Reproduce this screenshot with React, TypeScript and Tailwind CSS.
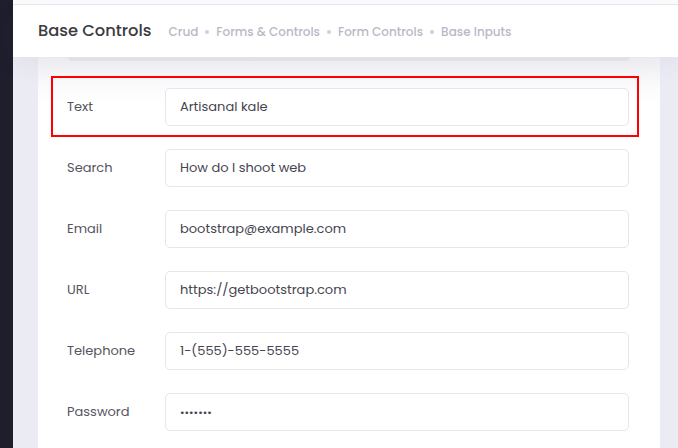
const fields = [
  { label: "Text", value: "Artisanal kale", type: "text", active: true },
  { label: "Search", value: "How do I shoot web", type: "search" },
  { label: "Email", value: "bootstrap@example.com", type: "email" },
  { label: "URL", value: "https://getbootstrap.com", type: "url" },
  { label: "Telephone", value: "1-(555)-555-5555", type: "tel" },
  { label: "Password", value: "1234567", type: "password" },
];

const crumbs = ["Crud", "Forms & Controls", "Form Controls", "Base Inputs"];

export default function App() {
  return (
    <div className="flex h-[448px] w-[678px] overflow-hidden bg-[#ebebf4] font-['Poppins','Inter',sans-serif]">
      <div className="w-[13px] shrink-0 bg-[#1e1e2d]" />

      <div className="flex min-w-0 flex-1 flex-col">
        <div className="h-[4px] shrink-0 bg-[#fcfcfd]" />
        <header className="relative z-10 flex h-[53px] shrink-0 items-center border-t border-[#e6e6ee] bg-white pl-[25px] shadow-[0_8px_24px_0_rgba(82,63,105,0.06)]">
          <h1 className="text-[16.3px] font-medium text-[#3a3a3f]">Base Controls</h1>
          <ul className="ml-[17px] mt-[2px] flex items-center text-[12px] font-medium text-[#b9b9c6]">
            {crumbs.map((c, i) => (
              <li key={c} className="flex items-center">
                {i > 0 && <span className="mx-[7px] h-[4px] w-[4px] rounded-full bg-[#cfcfd9]" />}
                {c}
              </li>
            ))}
          </ul>
        </header>

        <div className="flex min-h-0 flex-1 pl-[25px] pr-[18px]">
          <div className="flex-1 bg-[linear-gradient(to_bottom,#f2f2f6_0px,#ffffff_45px)]">
            <div className="mx-[30px] h-[4px] rounded-b-[6px] bg-[#e9e9f0]" />
            <div className="pl-[13px] pr-[21px] pt-[15px]">
              {fields.map((f) => (
                <div
                  key={f.label}
                  className={
                    "flex h-[61px] items-start border-2 pl-[14px] pr-[8px] pt-[10px] " +
                    (f.active ? "border-[#ff0000]" : "border-transparent")
                  }
                >
                  <label className="w-[98px] shrink-0 pt-[9px] text-[13px] text-[#555560]">{f.label}</label>
                  <input
                    readOnly
                    type={f.type}
                    defaultValue={f.value}
                    className={
                      "h-[38px] min-w-0 flex-1 rounded-[5px] border border-[#e4e6ef] bg-white px-[14px] text-[#45454f] outline-none " +
                      (f.type === "password" ? "text-[11px]" : "text-[13px]")
                    }
                  />
                </div>
              ))}
            </div>
          </div>
        </div>
      </div>
    </div>
  );
}
